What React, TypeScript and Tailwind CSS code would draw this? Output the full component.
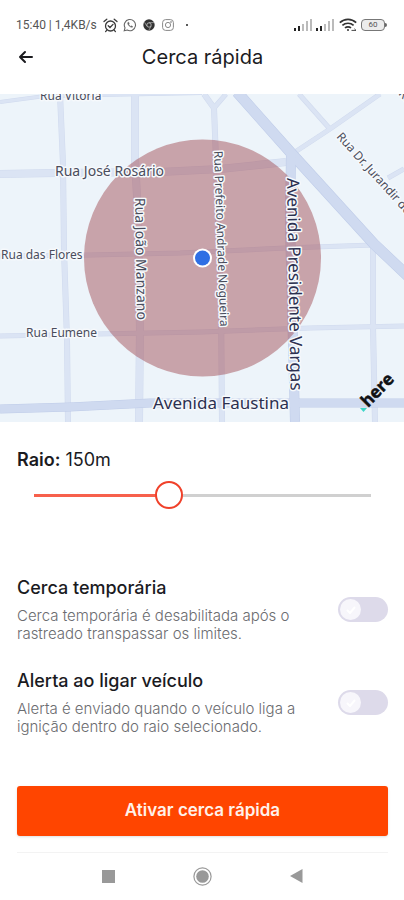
import { useState } from "react";

type Road = { d: string; w: number };

const roads: Road[] = [
  { d: "M0 8 L45 2 L100 1 L202 -1", w: 4 },
  { d: "M60 0 L63 70 L64 156 L67 246 L68 328", w: 6 },
  { d: "M135 0 L135 66 L138 120 L140 236 L139 328", w: 8 },
  { d: "M0 80 L55 79 L160 78 L220 75 L286 68", w: 8 },
  { d: "M0 162 L90 161 L180 159 L285 154 L373 151", w: 5 },
  { d: "M0 242 L97 240 L202 238 L310 234 L404 232", w: 5 },
  { d: "M204 0 L214 14 L216 66 L221 206 L222 328", w: 6 },
  { d: "M226 0 L214 14", w: 5 },
  { d: "M299 0 L330 35", w: 5 },
  { d: "M292 60 L330 35 L380 0", w: 5 },
  { d: "M388 84 L404 75", w: 5 },
  { d: "M373 151 L373 233 L375 328", w: 6 },
];

const avenues: Road[] = [
  { d: "M0 315 L70 313 L150 309 L295 309 L404 309", w: 9 },
  { d: "M237 -2 L292 60 L374 150 L410 184", w: 11 },
  { d: "M291 60 L290 130 L295 328", w: 10 },
];

function RoadLines({ items, edge, fill }: { items: Road[]; edge: string; fill: string }) {
  return (
    <g fill="none" strokeLinejoin="round">
      {items.map((r) => (
        <path key={r.d} d={r.d} stroke={edge} strokeWidth={r.w} />
      ))}
      {items.map((r) => (
        <path key={r.d} d={r.d} stroke={fill} strokeWidth={r.w - 1} />
      ))}
    </g>
  );
}

function FenceMap() {
  return (
    <svg
      viewBox="0 0 404 328"
      preserveAspectRatio="xMidYMid slice"
      className="block h-[328px] w-full bg-[#edf4fa]"
      role="img"
      aria-label="Mapa da cerca"
    >
      <RoadLines items={roads} edge="#d0daee" fill="#dbe4f4" />
      <RoadLines items={avenues} edge="#bfcce8" fill="#cfdaf0" />
      <circle cx="202.5" cy="164" r="118.5" fill="#a4525a" fillOpacity="0.5" />

      <g
        className="font-['Noto_Sans',sans-serif]"
        fill="#4a4d5c"
        stroke="#f6f9fc"
        strokeWidth="3"
        strokeLinejoin="round"
        paintOrder="stroke"
      >
        <text x="40" y="6" fontSize="12">Rua Vitória</text>
        <text x="55" y="82" fontSize="14">Rua José Rosário</text>
        <text x="1" y="165" fontSize="12">Rua das Flores</text>
        <text x="26" y="243" fontSize="12">Rua Eumene</text>
        <text transform="translate(135 104) rotate(89)" fontSize="14">Rua João Manzano</text>
        <text transform="translate(214 57) rotate(88)" fontSize="12">Rua Prefeito Andrade Nogueira</text>
        <text transform="translate(336 43) rotate(48)" fontSize="12">Rua Dr. Jurandir de</text>
        <text transform="translate(398 0) rotate(48)" fontSize="12">Rua</text>
        <g fill="#2c3050">
          <text transform="translate(287 84) rotate(89)" fontSize="17">Avenida Presidente Vargas</text>
          <text x="153" y="315" fontSize="17">Avenida Faustina</text>
        </g>
      </g>

      <circle cx="202.5" cy="164" r="9.5" fill="#fff" />
      <circle cx="202.5" cy="164" r="7.5" fill="#2f6fe4" />

      <path d="M360 314 L367 314 L363.5 318 Z" fill="#3fd6c8" />
      <text
        transform="translate(368 314) rotate(-46)"
        fontSize="17"
        fontWeight="700"
        fill="#101114"
        stroke="#101114"
        strokeWidth="0.5"
        className="font-['Open_Sans',sans-serif]"
      >
        here
      </text>
    </svg>
  );
}

function Signal() {
  return (
    <svg width="18" height="12" viewBox="0 0 18 12" aria-hidden="true">
      <rect x="0" y="9" width="2" height="3" fill="#222" />
      <rect x="4" y="7" width="2" height="5" fill="#222" />
      <rect x="8" y="5" width="2" height="7" fill="#bbb" />
      <rect x="12" y="2" width="2" height="10" fill="#bbb" />
      <rect x="16" y="0" width="2" height="12" fill="#bbb" />
    </svg>
  );
}

function StatusBar() {
  return (
    <div className="flex h-10 items-center justify-between pt-2.5 pr-[17px] pl-4">
      <div className="flex items-center">
        <span className="font-['Roboto',sans-serif] text-xs text-[#555]">15:40 | 1,4KB/s</span>
        <svg className="ml-1.5" width="15" height="15" viewBox="0 0 15 15" fill="none" stroke="#3a3a3a" strokeWidth="1.3" strokeLinecap="round" aria-hidden="true">
          <circle cx="7.5" cy="8" r="5" />
          <path d="M1 3.6 L3.8 1.2 M14 3.6 L11.2 1.2 M3.6 12.4 L2.6 13.6 M11.4 12.4 L12.4 13.6 M5.2 7.8 L7 9.5 L10 6.4" />
        </svg>
        <svg className="ml-[5px]" width="14" height="14" viewBox="0 0 14 14" fill="none" stroke="#666" strokeWidth="1.1" aria-hidden="true">
          <path d="M1.2 12.8 L2 9.8 A5.6 5.6 0 1 1 4.2 12 Z" />
          <path d="M5 4.2 C4 5.4 5.2 7.2 6.4 8.2 C7.8 9.4 9.2 9.8 9.9 8.7 L8.5 7.8 L7.7 8.4 C6.9 8 6.2 7.3 5.8 6.5 L6.3 5.7 L5.7 4.2 Z" fill="#666" strokeWidth="0.4" />
        </svg>
        <svg className="ml-[6px]" width="12" height="12" viewBox="0 0 12 12" fill="none" aria-hidden="true">
          <circle cx="6" cy="6" r="5.7" fill="#333" />
          <circle cx="6" cy="6" r="2.2" stroke="#ccc" strokeWidth="0.8" />
          <path d="M6 3.6 H11 M3.9 7.2 L1.5 3.2 M8.1 7.2 L5.8 11.3" stroke="#ccc" strokeWidth="0.6" />
        </svg>
        <svg className="ml-[7px]" width="12" height="12" viewBox="0 0 12 12" fill="none" stroke="#888" aria-hidden="true">
          <rect x="0.6" y="0.6" width="10.8" height="10.8" rx="3" />
          <circle cx="6" cy="6" r="2.6" />
          <circle cx="9" cy="3" r="0.4" fill="#888" />
        </svg>
        <span className="ml-3 size-0.5 rounded-full bg-[#222]" />
      </div>
      <div className="flex items-center gap-1">
        <Signal />
        <Signal />
        <svg className="ml-px" width="18" height="14" viewBox="0 0 18 14" fill="none" stroke="#333" strokeWidth="1.7" aria-hidden="true">
          <path d="M0.8 4.6 C5.5 0.2 12.5 0.2 17.2 4.6" />
          <path d="M3.4 7.4 C6.5 4.5 11.5 4.5 14.6 7.4" />
          <path d="M6 10 C7.6 8.4 10.4 8.4 12 10" />
          <circle cx="9" cy="12" r="1" fill="#333" stroke="none" />
          <path d="M12.5 12.4 H17 M15.4 10.8 L17 12.4" strokeWidth="0.9" />
        </svg>
        <div className="flex items-center">
          <span className="flex h-3 w-6 items-center justify-center rounded-[4px] border border-[#777] bg-[#ececec] font-['Roboto',sans-serif] text-[8px] leading-none text-[#555]">
            60
          </span>
          <span className="h-1 w-0.5 rounded-r bg-[#666]" />
        </div>
      </div>
    </div>
  );
}

type ToggleProps = {
  id: string;
  title: string;
  description: string;
};

function ToggleRow({ id, title, description }: ToggleProps) {
  const [on, setOn] = useState(false);

  return (
    <div className="flex items-center justify-between">
      <div className="w-[290px]">
        <label htmlFor={id} className="block text-lg leading-6 font-medium text-[#1b1b1f]">
          {title}
        </label>
        <p id={`${id}-desc`} className="mt-[7px] text-[15px] leading-[18px] font-light text-[#6b6c70]">
          {description}
        </p>
      </div>
      <label className="flex h-[25px] w-[50px] cursor-pointer items-center rounded-full bg-[#dddaea] px-0.5 has-checked:justify-end has-checked:bg-[#ff4500]">
        <input
          id={id}
          type="checkbox"
          checked={on}
          onChange={(e) => setOn(e.target.checked)}
          aria-describedby={`${id}-desc`}
          className="sr-only"
        />
        <span className="flex size-[21px] items-center justify-center rounded-full bg-[#f7f6fb]">
          <svg width="10" height="8" viewBox="0 0 10 8" fill="none" stroke="#fff" strokeWidth="2" aria-hidden="true">
            <path d="M1 4 L4 7 L9 1" />
          </svg>
        </span>
      </label>
    </div>
  );
}

const MIN = 50;
const MAX = 300;

export default function App() {
  const [radius, setRadius] = useState(150);
  const percent = ((radius - MIN) / (MAX - MIN)) * 100;

  return (
    <div className="min-h-screen bg-white font-['Inter',sans-serif] text-[#1b1b1f]">
      <StatusBar />

      <header className="mb-5 grid h-[34px] grid-cols-[24px_1fr_24px] items-center pr-4 pl-[17px]">
        <button type="button" aria-label="Voltar">
          <svg width="18" height="16" viewBox="0 0 18 16" fill="none" stroke="#1b1b1f" strokeWidth="2" strokeLinecap="round" strokeLinejoin="round">
            <path d="M15 8 H3 M8 3 L3 8 L8 13" />
          </svg>
        </button>
        <h1 className="text-center text-xl">Cerca rápida</h1>
      </header>

      <FenceMap />

      <main className="pt-[26px] pr-4 pl-[17px]">
        <label htmlFor="radius" className="block text-lg leading-6">
          <span className="font-semibold">Raio:</span> {radius}m
        </label>
        <div className="relative mx-[3px] mt-[9px] h-7">
          <div className="absolute inset-x-[14px] top-[13px] h-[3px] bg-[#d0d0d0]">
            <div className="h-full bg-[#f7604c]" style={{ width: `${percent}%` }} />
          </div>
          <input
            id="radius"
            type="range"
            min={MIN}
            max={MAX}
            value={radius}
            onChange={(e) => setRadius(Number(e.target.value))}
            className="relative block h-7 w-full cursor-pointer appearance-none bg-transparent [&::-webkit-slider-thumb]:size-7 [&::-webkit-slider-thumb]:appearance-none [&::-webkit-slider-thumb]:rounded-full [&::-webkit-slider-thumb]:border-2 [&::-webkit-slider-thumb]:border-[#f0412a] [&::-webkit-slider-thumb]:bg-white"
          />
        </div>

        <div className="mt-[67px] space-y-[26px]">
          <ToggleRow
            id="temporary"
            title="Cerca temporária"
            description="Cerca temporária é desabilitada após o rastreado transpassar os limites."
          />
          <ToggleRow
            id="ignition"
            title="Alerta ao ligar veículo"
            description="Alerta é enviado quando o veículo liga a ignição dentro do raio selecionado."
          />
        </div>

        <button
          type="button"
          className="mt-[50px] h-[50px] w-full rounded-[3px] bg-[#ff4500] text-[17px] font-semibold text-[#fff1ea] shadow-sm"
        >
          Ativar cerca rápida
        </button>
        <hr className="mt-4 border-[#f3f3f3]" />
      </main>

      <nav className="flex h-[46px] items-center justify-center gap-[78px]" aria-label="Sistema">
        <button type="button" aria-label="Recentes">
          <svg width="13" height="13" viewBox="0 0 13 13">
            <rect width="13" height="13" fill="#999" />
          </svg>
        </button>
        <button type="button" aria-label="Início">
          <svg width="19" height="19" viewBox="0 0 19 19">
            <circle cx="9.5" cy="9.5" r="8.6" fill="none" stroke="#999" strokeWidth="1.2" />
            <circle cx="9.5" cy="9.5" r="6.3" fill="#999" />
          </svg>
        </button>
        <button type="button" aria-label="Voltar ao anterior">
          <svg width="13" height="14" viewBox="0 0 13 14">
            <path d="M0 7 L12.5 0 V14 Z" fill="#999" />
          </svg>
        </button>
      </nav>
    </div>
  );
}
